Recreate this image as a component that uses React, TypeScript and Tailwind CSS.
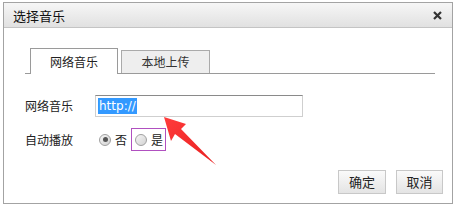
import React from "react";

const font = { fontFamily: '"Noto Sans CJK SC", "Noto Sans", sans-serif' };

function Radio({ checked }: { checked?: boolean }) {
  return (
    <span className="relative inline-flex h-[12px] w-[12px] items-center justify-center rounded-full border border-[#a0a0a0] bg-gradient-to-br from-[#f6f6f6] to-[#d2d2d2]">
      {checked && <span className="h-[5px] w-[5px] rounded-full bg-[#555]" />}
    </span>
  );
}

export default function App() {
  return (
    <div className="relative h-[206px] w-[455px] overflow-hidden bg-white text-[12px] text-[#222]" style={font}>
      <div className="ml-[3px] mt-[2px] flex h-[202px] w-[450px] flex-col border border-[#a3a3a3] bg-white">
        <div className="flex h-[25px] items-center justify-between border-b border-[#c4c4c4] bg-gradient-to-b from-[#f6f6f6] to-[#e1e1e1] pl-[9px] pr-[10px]">
          <span className="text-[13px] leading-none text-[#111]">选择音乐</span>
          <svg width="9" height="9" viewBox="0 0 9 9">
            <path d="M1 1 L8 8 M8 1 L1 8" stroke="#333" strokeWidth="2.2" />
          </svg>
        </div>
        <div className="flex flex-1 flex-col pl-[21px] pr-[9px]">
          <div className="mt-[20px] flex h-[26px] w-[410px] items-end border-b border-[#9a9a9a] pl-[5px]">
            <div className="-mb-px flex h-[26px] w-[88px] items-center justify-center border border-b-0 border-[#9a9a9a] bg-white">网络音乐</div>
            <div className="ml-[3px] flex h-[23px] w-[89px] items-center justify-center border border-b-0 border-[#aaa] bg-[#eeeeee] text-[#333]">本地上传</div>
          </div>
          <div className="mt-[21px] flex h-[22px] items-center">
            <span className="w-[70px]">网络音乐</span>
            <div className="flex h-[22px] w-[208px] items-center border border-[#cfcfcf] border-t-[#8a8a8a] pl-[2px]">
              <span className="bg-[#3399ff] px-[1px] leading-[16px] text-white" style={{ fontFamily: '"DejaVu Sans", sans-serif', fontSize: 12 }}>http://</span>
            </div>
          </div>
          <div className="mt-[11px] flex h-[23px] items-center">
            <span className="w-[74px]">自动播放</span>
            <Radio checked />
            <span className="ml-[4px]">否</span>
            <div className="ml-[4px] flex h-[23px] w-[35px] items-center border border-[#b050c0] pl-[3px]">
              <Radio />
              <span className="ml-[4px]">是</span>
            </div>
          </div>
          <div className="mt-auto mb-[9px] flex justify-end gap-[10px]">
            <button className="h-[24px] w-[48px] border border-[#c8c8c8] bg-gradient-to-b from-[#fafafa] to-[#e4e4e4] text-[13px] text-[#222]" style={font}>确定</button>
            <button className="h-[24px] w-[47px] border border-[#c8c8c8] bg-gradient-to-b from-[#fafafa] to-[#e4e4e4] text-[13px] text-[#222]" style={font}>取消</button>
          </div>
        </div>
      </div>
      <svg className="absolute left-0 top-0" width="455" height="206" viewBox="0 0 455 206">
        <defs>
          <linearGradient id="ar" x1="0" y1="0" x2="1" y2="1">
            <stop offset="0" stopColor="#ff3b3b" />
            <stop offset="1" stopColor="#e82020" />
          </linearGradient>
        </defs>
        <polygon points="164,117 186,124 181,129 216,165 175,134 171,141" fill="url(#ar)" />
      </svg>
    </div>
  );
}
